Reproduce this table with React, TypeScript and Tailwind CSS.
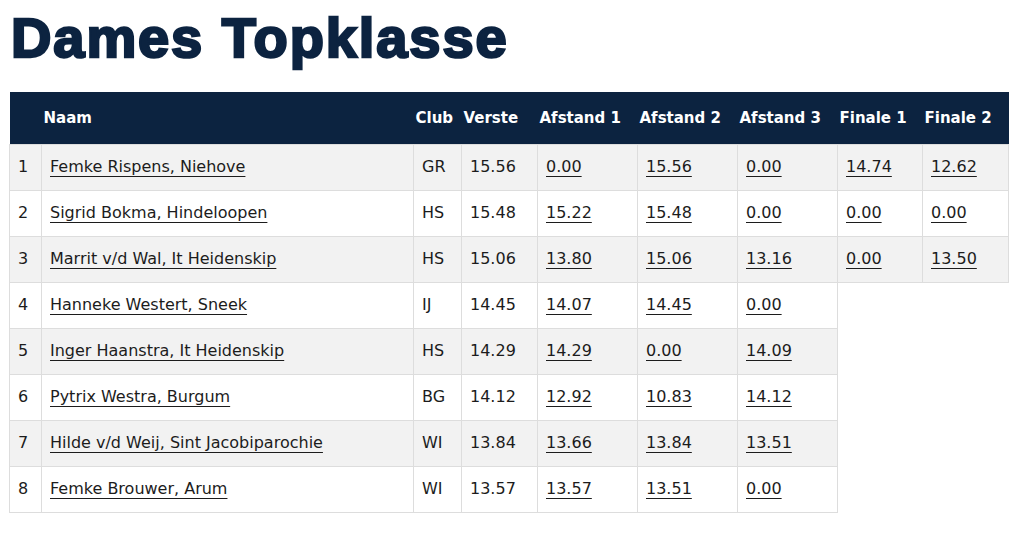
const headers = ['', 'Naam', 'Club', 'Verste', 'Afstand 1', 'Afstand 2', 'Afstand 3', 'Finale 1', 'Finale 2'];

const widths = ['w-[32px]', 'w-[372px]', 'w-[48px]', 'w-[76px]', 'w-[100px]', 'w-[100px]', 'w-[100px]', 'w-[85px]', 'w-[86px]'];

const results = [
  { pos: 1, name: 'Femke Rispens, Niehove', club: 'GR', best: '15.56', throws: ['0.00', '15.56', '0.00', '14.74', '12.62'] },
  { pos: 2, name: 'Sigrid Bokma, Hindeloopen', club: 'HS', best: '15.48', throws: ['15.22', '15.48', '0.00', '0.00', '0.00'] },
  { pos: 3, name: 'Marrit v/d Wal, It Heidenskip', club: 'HS', best: '15.06', throws: ['13.80', '15.06', '13.16', '0.00', '13.50'] },
  { pos: 4, name: 'Hanneke Westert, Sneek', club: 'IJ', best: '14.45', throws: ['14.07', '14.45', '0.00'] },
  { pos: 5, name: 'Inger Haanstra, It Heidenskip', club: 'HS', best: '14.29', throws: ['14.29', '0.00', '14.09'] },
  { pos: 6, name: 'Pytrix Westra, Burgum', club: 'BG', best: '14.12', throws: ['12.92', '10.83', '14.12'] },
  { pos: 7, name: 'Hilde v/d Weij, Sint Jacobiparochie', club: 'WI', best: '13.84', throws: ['13.66', '13.84', '13.51'] },
  { pos: 8, name: 'Femke Brouwer, Arum', club: 'WI', best: '13.57', throws: ['13.57', '13.51', '0.00'] },
];

const cell = 'border border-[#dddddd] px-[8px] h-[46px] align-middle';

const App = () => {
  return (
    <div className="min-h-screen bg-white px-[9px] pt-[6px] text-[#1c1c1c]" style={{ fontFamily: '"DejaVu Sans", sans-serif' }}>
      <h1
        className="text-[56px] leading-[64px] font-bold text-[#0c2340] ml-[2px] mb-[22px] tracking-[1.9px] [-webkit-text-stroke:2.5px_#0c2340]"
        style={{ fontFamily: '"Liberation Sans", Arial, sans-serif' }}
      >
        Dames Topklasse
      </h1>

      <table className="table-fixed border-collapse text-[16px]">
        <colgroup>
          {widths.map((w, i) => (
            <col key={i} className={w} />
          ))}
        </colgroup>
        <thead>
          <tr className="bg-[#0c2340] text-white h-[52px] text-[15px]">
            {headers.map((h, i) => (
              <th key={i} className="text-left font-bold px-[2px] whitespace-nowrap">
                {h}
              </th>
            ))}
          </tr>
        </thead>
        <tbody>
          {results.map((r) => (
            <tr key={r.pos} className={r.pos % 2 === 1 ? 'bg-[#f2f2f2]' : 'bg-white'}>
              <td className={cell}>{r.pos}</td>
              <td className={cell}>
                <a href="#" className="underline underline-offset-[4px]">{r.name}</a>
              </td>
              <td className={cell}>{r.club}</td>
              <td className={cell}>{r.best}</td>
              {r.throws.map((t, i) => (
                <td key={i} className={cell}>
                  <a href="#" className="underline underline-offset-[4px]">{t}</a>
                </td>
              ))}
            </tr>
          ))}
        </tbody>
      </table>
    </div>
  );
};

export default App;
